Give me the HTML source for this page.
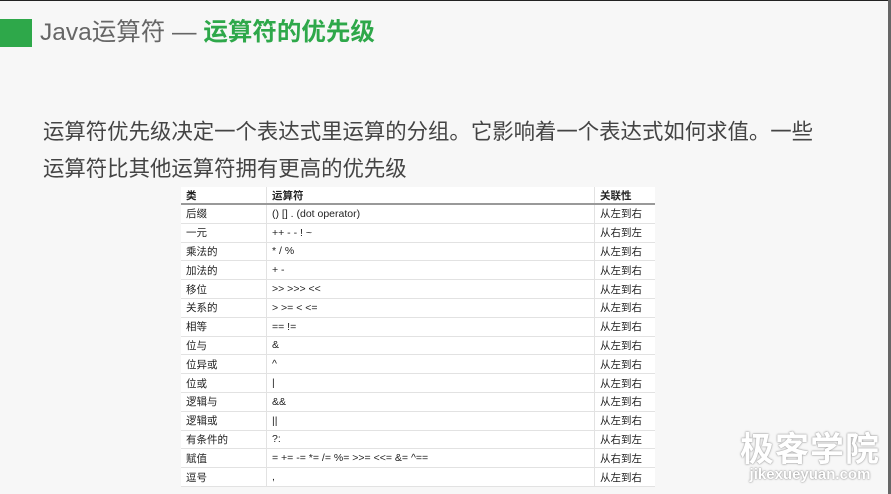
<!DOCTYPE html>
<html><head><meta charset="utf-8"><style>
body{margin:0;width:891px;height:494px;background:#f7f7f7;position:relative;overflow:hidden;font-family:"Liberation Sans","Noto Sans CJK SC",sans-serif;}
.top{position:absolute;left:0;top:0;width:891px;height:1px;background:#222;}
.right{position:absolute;right:0;top:0;width:3px;height:494px;background:#666;}
.sq{position:absolute;left:0;top:19px;width:32px;height:28px;background:#2ea84a;}
.title{position:absolute;left:40px;top:17px;font-size:24.5px;line-height:32px;color:#666;white-space:nowrap;}
.title b{color:#2ea84a;}
.body{position:absolute;left:43px;top:114px;font-size:21.4px;line-height:37px;color:#444;white-space:nowrap;}
table{position:absolute;left:181px;top:187px;width:474px;border-collapse:collapse;background:#fff;font-size:10.5px;color:#222;}
td,th{height:17.8px;padding:0 0 0 5px;text-align:left;border-bottom:1px solid #e2e2e2;white-space:nowrap;}
th{font-weight:bold;border-bottom:2px solid #999;height:16px;}
td:nth-child(2),th:nth-child(2),td:nth-child(3),th:nth-child(3){border-left:1px solid #e2e2e2;}
.wm{position:absolute;left:740px;top:432px;color:#fff;text-shadow:0 0 2px #999,0 0 1px #888;text-align:center;font-weight:bold;}
.wm .a{font-size:34px;line-height:36px;letter-spacing:1px;}
.wm .b{font-size:15px;line-height:14px;}
</style></head><body>
<div class="top"></div><div class="right"></div>
<div class="sq"></div>
<div class="title">Java运算符 — <b>运算符的优先级</b></div>
<div class="body">运算符优先级决定一个表达式里运算的分组。它影响着一个表达式如何求值。一些<br>运算符比其他运算符拥有更高的优先级</div>
<table>
<tr><th style="width:80px">类</th><th style="width:322px">运算符</th><th>关联性</th></tr>
<tr><td>后缀</td><td>() [] . (dot operator)</td><td>从左到右</td></tr>
<tr><td>一元</td><td>++ - - ! ~</td><td>从右到左</td></tr>
<tr><td>乘法的</td><td>* / %</td><td>从左到右</td></tr>
<tr><td>加法的</td><td>+ -</td><td>从左到右</td></tr>
<tr><td>移位</td><td>&gt;&gt; &gt;&gt;&gt; &lt;&lt;</td><td>从左到右</td></tr>
<tr><td>关系的</td><td>&gt; &gt;= &lt; &lt;=</td><td>从左到右</td></tr>
<tr><td>相等</td><td>== !=</td><td>从左到右</td></tr>
<tr><td>位与</td><td>&amp;</td><td>从左到右</td></tr>
<tr><td>位异或</td><td>^</td><td>从左到右</td></tr>
<tr><td>位或</td><td>|</td><td>从左到右</td></tr>
<tr><td>逻辑与</td><td>&amp;&amp;</td><td>从左到右</td></tr>
<tr><td>逻辑或</td><td>||</td><td>从左到右</td></tr>
<tr><td>有条件的</td><td>?:</td><td>从右到左</td></tr>
<tr><td>赋值</td><td>= += -= *= /= %= &gt;&gt;= &lt;&lt;= &amp;= ^==</td><td>从右到左</td></tr>
<tr><td>逗号</td><td>,</td><td>从左到右</td></tr>
</table>
<div class="wm"><div class="a">极客学院</div><div class="b">jikexueyuan.com</div></div>
</body></html>
